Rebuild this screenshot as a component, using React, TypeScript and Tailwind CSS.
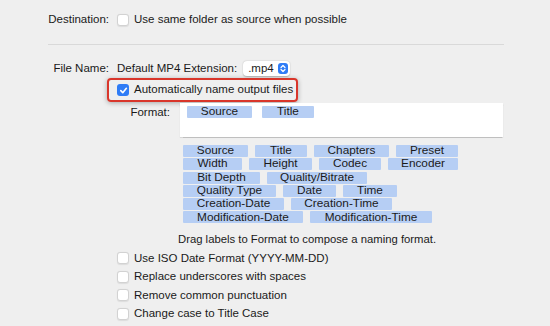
import React from 'react';

const tokenRows: [string, number][][] = [
  [['Source', 65], ['Title', 52], ['Chapters', 75], ['Preset', 62]],
  [['Width', 59], ['Height', 63], ['Codec', 62], ['Encoder', 70]],
  [['Bit Depth', 77], ['Quality/Bitrate', 100]],
  [['Quality Type', 93], ['Date', 53], ['Time', 54]],
  [['Creation-Date', 101], ['Creation-Time', 101]],
  [['Modification-Date', 120], ['Modification-Time', 122]],
];

const options = [
  'Use ISO Date Format (YYYY-MM-DD)',
  'Replace underscores with spaces',
  'Remove common punctuation',
  'Change case to Title Case',
];

function Checkbox({ checked = false }: { checked?: boolean }) {
  if (checked) {
    return (
      <span className="flex h-[12px] w-[12px] shrink-0 items-center justify-center rounded-[3px] bg-[#2f7cf6]">
        <svg width="9" height="9" viewBox="0 0 10 10">
          <path d="M2 5.2 L4.2 7.4 L8.2 2.6" fill="none" stroke="#fff" strokeWidth="1.8" strokeLinecap="round" strokeLinejoin="round" />
        </svg>
      </span>
    );
  }
  return (
    <span className="block h-[12px] w-[12px] shrink-0 rounded-[3px] border border-[#d2d2d2] bg-white shadow-[0_0.5px_1px_rgba(0,0,0,0.08)]" />
  );
}

function Token({ label, width }: { label: string; width: number }) {
  return (
    <span
      className="flex h-[12px] items-center justify-center rounded-[1px] bg-[#b6cef4] text-[11.8px] leading-none text-[#1a1a1a]"
      style={{ width }}
    >
      {label}
    </span>
  );
}

export default function App() {
  return (
    <div
      className="relative h-[326px] w-[550px] overflow-hidden bg-[#efefef] text-[11.5px] text-[#1a1a1a]"
      style={{ fontFamily: '"Liberation Sans", Arial, sans-serif' }}
    >
      {/* destination */}
      <div className="mt-[14px] flex h-[12px] items-center">
        <span className="w-[109px] text-right">Destination:</span>
        <span className="ml-[8px]"><Checkbox /></span>
        <span className="ml-[5px]">Use same folder as source when possible</span>
      </div>

      <div className="ml-[48px] mt-[18px] h-px w-[456px] bg-[#d9d9d9]" />

      {/* file name */}
      <div className="mt-[16px] flex h-[15px] items-center">
        <span className="w-[109px] text-right">File Name:</span>
        <span className="ml-[8px]">Default MP4 Extension:</span>
        <span className="ml-[6px] flex h-[15px] w-[47px] items-center justify-between rounded-[4px] bg-white pl-[5px] pr-[2px] shadow-[0_0.5px_1.5px_rgba(0,0,0,0.25)]">
          <span>.mp4</span>
          <span className="flex h-[11px] w-[10px] items-center justify-center rounded-[3px] bg-[#2f7cf6]">
            <svg width="6" height="9" viewBox="0 0 6 9">
              <path d="M1 3.5 L3 1.5 L5 3.5 M1 5.5 L3 7.5 L5 5.5" fill="none" stroke="#fff" strokeWidth="1.2" strokeLinecap="round" strokeLinejoin="round" />
            </svg>
          </span>
        </span>
      </div>

      {/* highlighted option */}
      <div className="ml-[107px] mt-[2px] flex h-[24px] w-[191px] items-center rounded-[4px] border-[2.5px] border-[#d9362b] pl-[8px] shadow-[0_1px_5px_rgba(0,0,0,0.3)]">
        <Checkbox checked />
        <span className="ml-[5px] whitespace-nowrap">Automatically name output files</span>
      </div>

      {/* format */}
      <div className="mt-[1px] flex">
        <span className="mt-[1px] w-[170px] text-right">Format:</span>
        <div className="ml-[10px] h-[34px] w-[323px] bg-white pt-[3px] pl-[7px] shadow-[0_0.5px_1px_rgba(0,0,0,0.2)]">
          <div className="flex gap-[10px]">
            <Token label="Source" width={65} />
            <Token label="Title" width={52} />
          </div>
        </div>
      </div>

      {/* tokens */}
      <div className="ml-[183px] mt-[8px] flex flex-col gap-[1.3px]">
        {tokenRows.map((row, i) => (
          <div key={i} className="flex gap-[7px]">
            {row.map(([label, w]) => (
              <Token key={label} label={label} width={w} />
            ))}
          </div>
        ))}
      </div>

      <div className="ml-[178px] mt-[9px] text-[11.3px] leading-[14px]">Drag labels to Format to compose a naming format.</div>

      <div className="mt-[6px] flex flex-col gap-[6.5px]">
        {options.map((o) => (
          <div key={o} className="ml-[117px] flex h-[12px] items-center">
            <Checkbox />
            <span className="ml-[5px]">{o}</span>
          </div>
        ))}
      </div>
    </div>
  );
}
